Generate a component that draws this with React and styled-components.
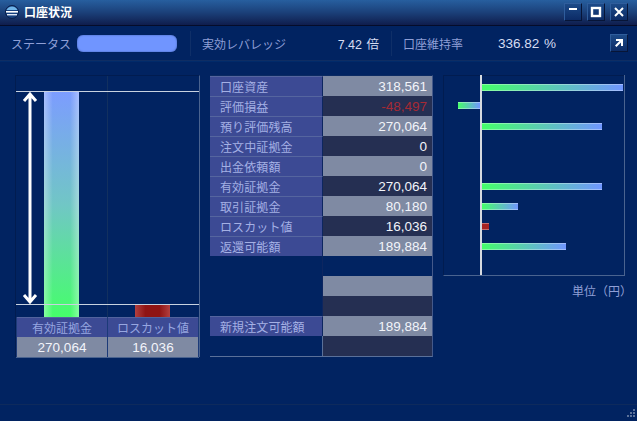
import React from "react";
import styled, { createGlobalStyle } from "styled-components";

const Global = createGlobalStyle`
  html, body { margin: 0; padding: 0; background: #012361; }
  * { box-sizing: border-box; }
`;
const FONT = `"Liberation Sans", "Noto Sans CJK JP", sans-serif`;

const Win = styled.div`
  width: 637px; height: 421px; display: flex; flex-direction: column; overflow: hidden;
  background: #012361; font-family: ${FONT}; font-size: 12px; color: #97a6dc;
`;
const TitleBar = styled.div`
  height: 26px; flex: none; display: flex; align-items: center; padding: 0 9px 2px 5px;
  background: linear-gradient(#275f9f, #1b4079 50%, #0f1d4d); border-bottom: 1px solid #050c2a;
`;
const Title = styled.div`
  color: #fff; font-weight: 700; font-size: 12px; margin-left: 5px; flex: 1;
`;
const Logo = styled.svg`width: 14px; height: 14px; flex: none;`;
const WinBtns = styled.div`display: flex; gap: 5px;`;
const WinBtn = styled.div`
  width: 18px; height: 18px; display: flex; align-items: center; justify-content: center;
  background: linear-gradient(#1c4a88, #0c2b66);
  border: 1px solid; border-color: #2f5d9c #071537 #071537 #2f5d9c;
`;
const Toolbar = styled.div`
  height: 35px; flex: none; display: flex; align-items: center; padding: 0 9px 0 11px;
  border-bottom: 1px solid #0f2d63; box-shadow: 0 1px 0 #012a6a;
`;
const ToolLabel = styled.span`margin-left: ${p => p.$ml || 0}px; width: ${p => p.$w}px; flex: none; color: #8f9fd6;`;
const ToolValue = styled.span`
  width: ${p => p.$w}px; margin-left: ${p => p.$ml || 0}px; flex: none; color: #d5dcf2; text-align: right; font-size: ${p => p.$size}px; word-spacing: 1px;
`;
const Pill = styled.div`
  width: 100px; height: 17px; margin-left: 6px; border-radius: 6px; flex: none; background: #7095ff;
  box-shadow: inset 0 0 2px #3c5aa8;
`;
const VDivider = styled.div`width: 1px; height: 25px; background: #0f2f68; margin-left: ${p => p.$ml}px; flex: none;`;
const ExpandBtn = styled(WinBtn)`margin-left: auto;`;

const Body = styled.div`
  flex: 1; display: flex; align-items: flex-start; padding: 14px 0 0 15px; min-height: 0;
`;
const Gauge = styled.div`
  width: 185px; height: 282px; flex: none; display: flex; flex-direction: column;
  border-top: 1px solid #011c50; border-left: 1px solid #011c50; border-right: 1px solid #4a638f;
`;
const GaugePlot = styled.div`
  position: relative; height: 241px; flex: none; display: grid; grid-template-columns: 91px 1fr;
`;
const GaugeCol = styled.div`
  display: flex; justify-content: center; align-items: flex-end;
  & + & { border-left: 1px solid #12305f; padding-right: 2px; }
`;
const GaugeBar = styled.div`
  width: 35px; height: ${p => p.$h}px;
  background: ${p => p.$red
    ? "linear-gradient(90deg, #b24040, #8f1414 30%, #8f1414 70%, #b24040)"
    : "linear-gradient(90deg, rgba(255,255,255,.35), transparent 25%, transparent 75%, rgba(255,255,255,.35)), linear-gradient(#7c9cff, #71c6c6 50%, #45ff6a)"};
`;
const GaugeLine = styled.div`
  position: absolute; left: 0; right: 0; top: ${p => p.$top}px; height: 1px; background: #c8d2e0;
`;
const GaugeArrow = styled.svg`position: absolute; left: 6px; top: 15px; width: 16px; height: 214px;`;
const GaugeFoot = styled.div`
  display: grid; grid-template-columns: 90px 90px; column-gap: 1px; padding-left: 1px;
  background: #1c3a78; border-bottom: 1px solid #4a638f;
`;
const FootCell = styled.div`
  height: 20px; display: flex; align-items: center; justify-content: center;
  background: ${p => p.$value ? "#7f8aa3" : "#3c4a94"}; color: ${p => p.$value ? "#f2f4fa" : "#97a6e0"};
  border-top: ${p => p.$value ? "0" : "1px solid #52639e"};
  font-size: ${p => p.$value ? 13.5 : 12}px;
`;

const Table = styled.div`
  width: 223px; height: 282px; margin-left: 10px; flex: none;
  display: grid; grid-template-columns: 113px 109px; grid-auto-rows: 20px; align-content: start;
  border-top: 1px solid #0b2a63; border-bottom: 1px solid #5a7099; border-right: 1px solid #44598a;
`;
const Label = styled.div`
  display: flex; align-items: center; padding-left: 10px; letter-spacing: .1px;
  background: ${p => p.$empty ? "transparent" : "#3c4a94"};
  border-top: ${p => p.$empty ? "0" : "1px solid #55659f"};
  border-right: 1px solid ${p => p.$lit ? "#5a7099" : "#0d2660"}; color: #a4b0e4;
`;
const Value = styled.div`
  display: flex; align-items: center; justify-content: flex-end; padding-right: 5px; font-size: 13.5px;
  background: ${p => p.$bg}; color: ${p => p.$red ? "#a52a35" : "#f2f4fa"};
`;

const ChartWrap = styled.div`
  margin-left: 10px; width: 182px; flex: none; display: flex; flex-direction: column;
`;
const Chart = styled.div`
  height: 201px; border-left: 1px solid #011c50; box-shadow: inset 0 1px 0 #011c50;
  border-right: 1px solid #4a638f; border-bottom: 1px solid #4a638f;
  display: grid; grid-template-rows: 2px repeat(9, 20px) 1fr;
`;
const ChartRow = styled.div`display: grid; grid-template-columns: 36px 2px 1fr; align-items: stretch;`;
const Neg = styled.div`display: flex; justify-content: flex-end; align-items: flex-start; padding-top: ${p => p.$pt || 0}px;`;
const Zero = styled.div`background: #d6dae0;`;
const Pos = styled.div`display: flex; align-items: flex-start; padding-top: ${p => p.$pt || 0}px;`;
const Bar = styled.div`
  height: 7px; flex: none;
  background: ${p => p.$red ? "#a52222" : "linear-gradient(90deg, #45ff6a, #7096ff)"};
  box-shadow: inset 0 1px 0 rgba(255,255,255,.35), inset 0 -1px 0 rgba(255,255,255,.35);
`;
const Unit = styled.div`text-align: right; margin: 6px -7px 0 0; color: #8f9fd6;`;

const StatusBar = styled.div`
  height: 17px; flex: none; border-top: 1px solid #0e2a5c; display: flex; justify-content: flex-end; align-items: flex-end; padding: 0 1px 2px 0;
`;

const rows = [
  ["口座資産", "318,561", "#7f8aa3"],
  ["評価損益", "-48,497", "#252f52", true],
  ["預り評価残高", "270,064", "#7f8aa3"],
  ["注文中証拠金", "0", "#252f52"],
  ["出金依頼額", "0", "#7f8aa3"],
  ["有効証拠金", "270,064", "#252f52"],
  ["取引証拠金", "80,180", "#7f8aa3"],
  ["ロスカット値", "16,036", "#252f52"],
  ["返還可能額", "189,884", "#7f8aa3"],
  ["", "", "transparent"],
  ["", "", "#7f8aa3"],
  ["", "", "#252f52"],
  ["新規注文可能額", "189,884", "#7f8aa3"],
  ["", "", "#252f52"],
];
const bars = [
  { w: 141, pt: 7 }, { neg: 22, pt: 5 }, { w: 120, pt: 6 }, {}, {},
  { w: 120, pt: 6 }, { w: 36, pt: 6 }, { w: 7, red: true, pt: 6 }, { w: 84, pt: 6 },
];

export default function App() {
  return (
    <Win>
      <Global />
      <TitleBar>
        <Logo viewBox="0 0 14 14">
          <circle cx="7" cy="7" r="6.5" fill="#16407f" stroke="#0a1f4c" />
          <path d="M1.5 5a6 6 0 0 1 11 0z" fill="#6fb4e8" />
          <rect x="1" y="6" width="12" height="1.6" fill="#fff" />
          <rect x="2" y="9" width="10" height="1.4" fill="#dfe7f5" />
        </Logo>
        <Title>口座状況</Title>
        <WinBtns>
          <WinBtn><svg width="12" height="12" viewBox="0 0 12 12"><rect x="2" y="2" width="8" height="2" fill="#fff" /></svg></WinBtn>
          <WinBtn><svg width="12" height="12" viewBox="0 0 12 12"><rect x="2" y="2" width="8" height="8" fill="none" stroke="#fff" strokeWidth="2.4" /></svg></WinBtn>
          <WinBtn><svg width="12" height="12" viewBox="0 0 12 12"><path d="M2 2l8 8M10 2l-8 8" stroke="#fff" strokeWidth="2" /></svg></WinBtn>
        </WinBtns>
      </TitleBar>
      <Toolbar>
        <ToolLabel $w={60}>ステータス</ToolLabel>
        <Pill />
        <VDivider $ml={13} />
        <ToolLabel $ml={11} $w={84}>実効レバレッジ</ToolLabel>
        <ToolValue $ml={10} $w={83} $size={12.5}>7.42 倍</ToolValue>
        <VDivider $ml={12} />
        <ToolLabel $ml={11} $w={60}>口座維持率</ToolLabel>
        <ToolValue $ml={10} $w={83} $size={13.5}>336.82 %</ToolValue>
        <ExpandBtn><svg width="12" height="12" viewBox="0 0 12 12"><path d="M3 2h7v7h-2V5.5L3.5 10 2 8.5 6.5 4H3z" fill="#fff" /></svg></ExpandBtn>
      </Toolbar>
      <Body>
        <Gauge>
          <GaugePlot>
            <GaugeCol><GaugeBar $h={226} /></GaugeCol>
            <GaugeCol><GaugeBar $red $h={12} /></GaugeCol>
            <GaugeLine $top={15} />
            <GaugeLine $top={228} />
            <GaugeArrow viewBox="0 0 16 214">
              <path d="M8 3V211M2 10L8 3L14 10M2 204L8 211L14 204" fill="none" stroke="#fff" strokeWidth="3" />
            </GaugeArrow>
          </GaugePlot>
          <GaugeFoot>
            <FootCell>有効証拠金</FootCell>
            <FootCell>ロスカット値</FootCell>
            <FootCell $value>270,064</FootCell>
            <FootCell $value>16,036</FootCell>
          </GaugeFoot>
        </Gauge>
        <Table>
          {rows.map(([l, v, bg, red], i) => (
            <React.Fragment key={i}>
              <Label $empty={!l} $lit={i === rows.length - 1}>{l}</Label>
              <Value $bg={bg} $red={red}>{v}</Value>
            </React.Fragment>
          ))}
        </Table>
        <ChartWrap>
          <Chart>
            <ChartRow><Neg /><Zero /><Pos /></ChartRow>
            {bars.map((b, i) => (
              <ChartRow key={i}>
                <Neg $pt={b.pt}>{b.neg && <Bar style={{ width: b.neg }} />}</Neg>
                <Zero />
                <Pos $pt={b.pt}>{b.w && <Bar $red={b.red} style={{ width: b.w }} />}</Pos>
              </ChartRow>
            ))}
            <ChartRow><Neg /><Zero /><Pos /></ChartRow>
          </Chart>
          <Unit>単位（円）</Unit>
        </ChartWrap>
      </Body>
      <StatusBar>
        <svg width="12" height="12" viewBox="0 0 12 12" fill="#5a7099">
          <rect x="9" y="2" width="2" height="2" /><rect x="9" y="5" width="2" height="2" /><rect x="6" y="5" width="2" height="2" />
          <rect x="9" y="8" width="2" height="2" /><rect x="6" y="8" width="2" height="2" /><rect x="3" y="8" width="2" height="2" />
        </svg>
      </StatusBar>
    </Win>
  );
}
